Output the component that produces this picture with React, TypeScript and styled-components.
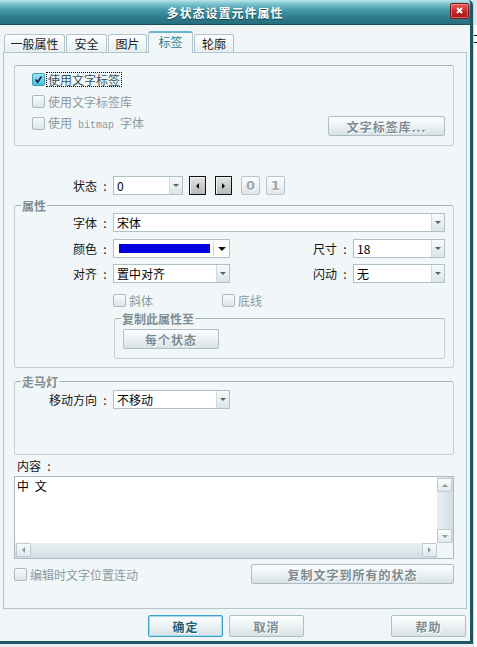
import React from 'react';
import styled, { createGlobalStyle, css } from 'styled-components';

const Global = createGlobalStyle`
  html, body { margin: 0; padding: 0; background: #e8eef0; }
  body {
    font-family: "Noto Sans CJK SC", "Noto Sans", sans-serif;
    font-size: 12px;
    color: #111;
  }
  * { box-sizing: border-box; }
`;

const Page = styled.div`
  display: flex;
  width: 477px;
  height: 647px;
  overflow: hidden;
`;

const Dialog = styled.div`
  flex: none;
  width: 473px;
  height: 644px;
  display: flex;
  flex-direction: column;
  background: #f0f5f7;
  border-right: 3px solid #1e5764;
  border-bottom: 3px solid #1e5764;
  border-top-right-radius: 5px;
`;

const RightStrip = styled.div`
  flex: none;
  width: 4px;
  height: 647px;
  border-left: 1px solid #c9d3d6;
  background:
    linear-gradient(to bottom,
      #dde6e9 0, #dde6e9 25px,
      #fff 25px, #fff 35px,
      #000 35px, #000 36px,
      #fff 36px, #fff 42px,
      #000 42px, #000 43px,
      #fff 43px);
`;

const TitleBar = styled.div`
  flex: none;
  height: 25px;
  display: flex;
  align-items: center;
  border-top-right-radius: 4px;
  background: linear-gradient(to bottom,
    #b9e5eb 0%, #7cc4cf 16%, #449aab 42%, #2f7c8c 72%, #276e7e 100%);
  border-bottom: 1px solid #1b4f5a;
`;

const Title = styled.div`
  flex: 1;
  text-align: center;
  color: #fff;
  font-weight: bold;
  font-size: 12px;
  letter-spacing: 1px;
  text-shadow: 0 1px 1px rgba(0, 40, 50, 0.7);
`;

const CloseBtn = styled.div`
  flex: none;
  width: 19px;
  height: 16px;
  margin-right: 1px;
  margin-top: -3px;
  border: 1px solid #7d1515;
  border-radius: 2px;
  background: linear-gradient(to bottom, #e86060, #c02626 55%, #a81818);
  box-shadow: inset 0 0 0 1px rgba(255, 190, 190, 0.45);
  display: flex;
  align-items: center;
  justify-content: center;
`;

const Body = styled.div`
  flex: 1;
  display: flex;
  flex-direction: column;
  padding: 6px 3px 0 3px;
`;

const TabRow = styled.div`
  flex: none;
  height: 21px;
  display: flex;
  align-items: flex-end;
  gap: 1px;
  padding-left: 1px;
  position: relative;
  z-index: 1;
`;

const Tab = styled.div<{ $w: number; $active?: boolean }>`
  flex: none;
  width: ${p => p.$w}px;
  height: 18px;
  border: 1px solid #b3c5cc;
  border-bottom: none;
  border-radius: 3px 3px 0 0;
  background: linear-gradient(to bottom, #fdfefe, #e6eef1);
  display: flex;
  align-items: center;
  justify-content: center;
  color: #1c1c1c;
  ${p =>
    p.$active &&
    css`
      height: 22px;
      margin-bottom: -1px;
      border-top: 2px solid #6ab7cd;
      background: #f1f6f8;
      color: #2c7f95;
      padding-bottom: 4px;
    `}
`;

const Panel = styled.div`
  flex: none;
  height: 557px;
  border: 1px solid #b3c5cc;
  background: #f1f6f8;
  display: flex;
  flex-direction: column;
  padding: 0 12px 0 10px;
`;

const frame = css`
  border: 1px solid #c4d2d7;
  border-top-color: #a2b4bb;
  border-radius: 3px;
`;

const PlainGroup = styled.div`
  ${frame};
  margin-top: 12px;
  padding: 7px 8px 9px 17px;
  display: flex;
  flex-direction: column;
`;

const Group = styled.fieldset<{ $mt: number; $ml?: number; $pb: number }>`
  ${frame};
  margin: ${p => p.$mt}px 0 0 ${p => p.$ml ?? 0}px;
  padding: 0 8px ${p => p.$pb}px 0;
  min-width: 0;
`;

const Legend = styled.legend`
  margin-left: 6px;
  padding: 0 1px;
  font-weight: bold;
  font-size: 12px;
  line-height: 13px;
  color: #7f8d92;
`;

const Row = styled.div<{ $mt: number }>`
  display: flex;
  align-items: center;
  height: 19px;
  margin-top: ${p => p.$mt}px;
`;

const SplitRow = styled.div<{ $mt: number }>`
  display: flex;
  align-items: flex-start;
  justify-content: space-between;
  margin-top: ${p => p.$mt}px;
`;

const BottomRow = styled.div`
  display: flex;
  align-items: center;
  justify-content: space-between;
  height: 20px;
  margin-top: 5px;
`;

const FieldLabel = styled.span<{ $w: number }>`
  flex: none;
  width: ${p => p.$w}px;
  text-align: right;
  white-space: nowrap;
  line-height: 13px;
  color: #141414;
`;

const Colon = styled.span`
  display: inline-block;
  width: 16px;
  text-align: center;
`;

const ContentLabel = styled.div`
  margin-top: 4px;
  margin-left: 3px;
  line-height: 13px;
  color: #141414;
`;

const Combo = styled.div<{ $w: number }>`
  flex: none;
  width: ${p => p.$w}px;
  height: 19px;
  border: 1px solid #afc1c8;
  background: #fff;
  display: flex;
`;

const ComboText = styled.div`
  flex: 1;
  padding-left: 3px;
  line-height: 17px;
  color: #000;
  white-space: nowrap;
`;

const ComboArrow = styled.div`
  flex: none;
  width: 13px;
  border-left: 1px solid #cfdadf;
  background: linear-gradient(to bottom, #f8fafb, #dbe4e7);
  display: flex;
  align-items: center;
  justify-content: center;
`;

const SmallTri = styled.span<{ $dir: 'down' | 'up' | 'left' | 'right'; $c?: string; $s?: number }>`
  width: 0;
  height: 0;
  ${p => {
    const s = p.$s ?? 3;
    const c = p.$c ?? '#5a6468';
    if (p.$dir === 'down')
      return css`border-left: ${s}px solid transparent; border-right: ${s}px solid transparent; border-top: ${s}px solid ${c};`;
    if (p.$dir === 'up')
      return css`border-left: ${s}px solid transparent; border-right: ${s}px solid transparent; border-bottom: ${s}px solid ${c};`;
    if (p.$dir === 'left')
      return css`border-top: ${s}px solid transparent; border-bottom: ${s}px solid transparent; border-right: ${s}px solid ${c};`;
    return css`border-top: ${s}px solid transparent; border-bottom: ${s}px solid transparent; border-left: ${s}px solid ${c};`;
  }}
`;

const ColorField = styled.div`
  flex: 1;
  display: flex;
  align-items: center;
  padding-left: 5px;
`;

const ColorBar = styled.div<{ $color: string }>`
  width: 91px;
  height: 9px;
  background: ${p => p.$color};
`;

const ColorSep = styled.div`
  width: 1px;
  height: 15px;
  margin-left: 3px;
  background: #c9d4d8;
`;

const ColorArrow = styled.div`
  width: 16px;
  display: flex;
  align-items: center;
  justify-content: center;
`;

const StepBtn = styled.div<{ $ml: number }>`
  flex: none;
  width: 17px;
  height: 19px;
  margin-left: ${p => p.$ml}px;
  border: 1px solid #111;
  background: linear-gradient(to bottom, #e4e4e4, #b9b9b9);
  box-shadow: inset 1px 1px 0 #f4f4f4;
  display: flex;
  align-items: center;
  justify-content: center;
`;

const DigitBtn = styled.div<{ $ml: number }>`
  flex: none;
  width: 19px;
  height: 19px;
  margin-left: ${p => p.$ml}px;
  border: 1px solid #b6c6cc;
  border-radius: 2px;
  background: linear-gradient(to bottom, #fbfdfd, #dfe7ea);
  display: flex;
  align-items: center;
  justify-content: center;
  font-family: "DejaVu Sans", "Liberation Sans", sans-serif;
  font-weight: bold;
  font-size: 13px;
  color: #9daaaf;
  text-shadow: 1px 1px 0 #fff;
`;

const CheckRow = styled.div<{ $mt?: number; $w?: number }>`
  display: flex;
  align-items: center;
  gap: 3px;
  height: 13px;
  margin-top: ${p => p.$mt ?? 0}px;
  ${p => p.$w && css`width: ${p.$w}px; flex: none;`}
`;

const CheckLine = styled.div<{ $mt: number; $pl: number }>`
  display: flex;
  margin-top: ${p => p.$mt}px;
  padding-left: ${p => p.$pl}px;
`;

const Box = styled.span<{ $checked?: boolean }>`
  flex: none;
  width: 13px;
  height: 13px;
  border: 1px solid #a9b9bf;
  border-radius: 2px;
  background: linear-gradient(to bottom, #f9fbfc, #dce5e8);
  display: flex;
  align-items: center;
  justify-content: center;
  ${p =>
    p.$checked &&
    css`
      border-color: #3e9cb8;
      background: linear-gradient(to bottom, #9be4f2, #4fbcd8);
    `}
`;

const CheckText = styled.span<{ $disabled?: boolean; $focus?: boolean }>`
  line-height: 13px;
  white-space: nowrap;
  color: ${p => (p.$disabled ? '#8b999e' : '#2f5560')};
  ${p =>
    p.$focus &&
    css`
      outline: 1px dotted #000;
      margin-left: -1px;
      padding: 0 1px;
    `}
`;

const Mono = styled.span`
  font-family: "Liberation Mono", "DejaVu Sans Mono", monospace;
  font-size: 10px;
  white-space: pre;
`;

const Btn = styled.div<{ $w: number; $h?: number; $mt?: number; $ml?: number; $primary?: boolean }>`
  flex: none;
  width: ${p => p.$w}px;
  height: ${p => p.$h ?? 20}px;
  margin-top: ${p => p.$mt ?? 0}px;
  margin-left: ${p => p.$ml ?? 0}px;
  border: 1px solid #adbec4;
  border-radius: 2px;
  background: linear-gradient(to bottom, #fdfefe 0%, #eef3f5 45%, #d7e1e4 100%);
  display: flex;
  align-items: center;
  justify-content: center;
  font-weight: bold;
  font-size: 12px;
  letter-spacing: 1px;
  color: #7d8b90;
  text-shadow: 1px 1px 0 #fff;
  white-space: nowrap;
  ${p =>
    p.$primary &&
    css`
      border-color: #3d9fc4;
      box-shadow: inset 0 0 0 1px #a6dbee;
      color: #1d5f78;
    `}
`;

const Footer = styled.div`
  flex: none;
  display: flex;
  gap: 6px;
  margin-top: 6px;
  padding: 0 1px 0 145px;
`;

const Spacer = styled.div`
  flex: 1;
`;

const TextBox = styled.div`
  height: 83px;
  margin-top: 4px;
  border: 1px solid #a9bcc3;
  background: #fff;
  display: grid;
  grid-template-columns: 1fr 16px;
  grid-template-rows: 1fr 15px;
`;

const TextContent = styled.div`
  padding: 2px 2px;
  line-height: 13px;
  color: #000;
  word-spacing: 3px;
`;

const VScroll = styled.div`
  display: flex;
  flex-direction: column;
  justify-content: space-between;
  padding: 1px 1px 0 0;
  background: linear-gradient(to right, #e8eff2, #d3dee2);
`;

const HScroll = styled.div`
  display: flex;
  justify-content: space-between;
  padding: 0 0 0 1px;
  background: linear-gradient(to bottom, #e8eff2, #d3dee2);
`;

const Corner = styled.div`
  background: #f1f6f8;
`;

const ScrollBtn = styled.div`
  width: 15px;
  height: 14px;
  border: 1px solid #bccbd1;
  border-radius: 1px;
  background: linear-gradient(to bottom, #fbfdfd, #e0e8eb);
  display: flex;
  align-items: center;
  justify-content: center;
`;

const CheckMark = () => (
  <svg width="9" height="9" viewBox="0 0 9 9">
    <path d="M1.5 4.5 L3.6 7 L7.6 1.5" stroke="#0e2f4a" strokeWidth="1.7" fill="none" />
  </svg>
);

export default function App() {
  return (
    <>
      <Global />
      <Page>
        <Dialog>
          <TitleBar>
            <Title>多状态设置元件属性</Title>
            <CloseBtn>
              <svg width="7" height="7" viewBox="0 0 7 7">
                <path d="M1 1 L6 6 M6 1 L1 6" stroke="#fff" strokeWidth="1.8" />
              </svg>
            </CloseBtn>
          </TitleBar>
          <Body>
            <TabRow>
              <Tab $w={61}>一般属性</Tab>
              <Tab $w={41}>安全</Tab>
              <Tab $w={39}>图片</Tab>
              <Tab $w={45} $active>标签</Tab>
              <Tab $w={40}>轮廓</Tab>
            </TabRow>
            <Panel>
              <PlainGroup>
                <CheckRow>
                  <Box $checked><CheckMark /></Box>
                  <CheckText $focus>使用文字标签</CheckText>
                </CheckRow>
                <CheckRow $mt={9}>
                  <Box />
                  <CheckText $disabled>使用文字标签库</CheckText>
                </CheckRow>
                <SplitRow $mt={8}>
                  <CheckRow $mt={1}>
                    <Box />
                    <CheckText $disabled>使用<Mono> bitmap </Mono>字体</CheckText>
                  </CheckRow>
                  <Btn $w={117}>文字标签库...</Btn>
                </SplitRow>
              </PlainGroup>

              <Row $mt={30}>
                <FieldLabel $w={99}>状态<Colon>:</Colon></FieldLabel>
                <Combo $w={70}>
                  <ComboText>0</ComboText>
                  <ComboArrow><SmallTri $dir="down" /></ComboArrow>
                </Combo>
                <StepBtn $ml={6}><SmallTri $dir="left" $c="#000" /></StepBtn>
                <StepBtn $ml={9}><SmallTri $dir="right" $c="#000" /></StepBtn>
                <DigitBtn $ml={9}>0</DigitBtn>
                <DigitBtn $ml={6}>1</DigitBtn>
              </Row>

              <Group $mt={4} $pb={8}>
                <Legend>属性</Legend>
                <Row $mt={1}>
                  <FieldLabel $w={98}>字体<Colon>:</Colon></FieldLabel>
                  <Combo $w={332}>
                    <ComboText>宋体</ComboText>
                    <ComboArrow><SmallTri $dir="down" /></ComboArrow>
                  </Combo>
                </Row>
                <Row $mt={7}>
                  <FieldLabel $w={98}>颜色<Colon>:</Colon></FieldLabel>
                  <Combo $w={117}>
                    <ColorField>
                      <ColorBar $color="#0000e0" />
                      <ColorSep />
                    </ColorField>
                    <ColorArrow><SmallTri $dir="down" $c="#111" $s={4} /></ColorArrow>
                  </Combo>
                  <FieldLabel $w={123}>尺寸<Colon>:</Colon></FieldLabel>
                  <Combo $w={92}>
                    <ComboText>18</ComboText>
                    <ComboArrow><SmallTri $dir="down" /></ComboArrow>
                  </Combo>
                </Row>
                <Row $mt={6}>
                  <FieldLabel $w={98}>对齐<Colon>:</Colon></FieldLabel>
                  <Combo $w={117}>
                    <ComboText>置中对齐</ComboText>
                    <ComboArrow><SmallTri $dir="down" /></ComboArrow>
                  </Combo>
                  <FieldLabel $w={123}>闪动<Colon>:</Colon></FieldLabel>
                  <Combo $w={92}>
                    <ComboText>无</ComboText>
                    <ComboArrow><SmallTri $dir="down" /></ComboArrow>
                  </Combo>
                </Row>
                <CheckLine $mt={11} $pl={98}>
                  <CheckRow $w={109}>
                    <Box />
                    <CheckText $disabled>斜体</CheckText>
                  </CheckRow>
                  <CheckRow>
                    <Box />
                    <CheckText $disabled>底线</CheckText>
                  </CheckRow>
                </CheckLine>
                <Group $mt={5} $ml={99} $pb={9}>
                  <Legend>复制此属性至</Legend>
                  <Btn $w={96} $mt={4} $ml={8}>每个状态</Btn>
                </Group>
              </Group>

              <Group $mt={7} $pb={45}>
                <Legend>走马灯</Legend>
                <Row $mt={2}>
                  <FieldLabel $w={98}>移动方向<Colon>:</Colon></FieldLabel>
                  <Combo $w={117}>
                    <ComboText>不移动</ComboText>
                    <ComboArrow><SmallTri $dir="down" /></ComboArrow>
                  </Combo>
                </Row>
              </Group>

              <ContentLabel>内容<Colon>:</Colon></ContentLabel>
              <TextBox>
                <TextContent>中 文</TextContent>
                <VScroll>
                  <ScrollBtn><SmallTri $dir="up" $c="#8c989c" /></ScrollBtn>
                  <ScrollBtn><SmallTri $dir="down" $c="#8c989c" /></ScrollBtn>
                </VScroll>
                <HScroll>
                  <ScrollBtn><SmallTri $dir="left" $c="#8c989c" /></ScrollBtn>
                  <ScrollBtn><SmallTri $dir="right" $c="#8c989c" /></ScrollBtn>
                </HScroll>
                <Corner />
              </TextBox>

              <BottomRow>
                <CheckRow>
                  <Box />
                  <CheckText $disabled>编辑时文字位置连动</CheckText>
                </CheckRow>
                <Btn $w={203}>复制文字到所有的状态</Btn>
              </BottomRow>
            </Panel>
            <Footer>
              <Btn $w={75} $h={22} $primary>确定</Btn>
              <Btn $w={75} $h={22}>取消</Btn>
              <Spacer />
              <Btn $w={75} $h={22}>帮助</Btn>
            </Footer>
          </Body>
        </Dialog>
        <RightStrip />
      </Page>
    </>
  );
}
